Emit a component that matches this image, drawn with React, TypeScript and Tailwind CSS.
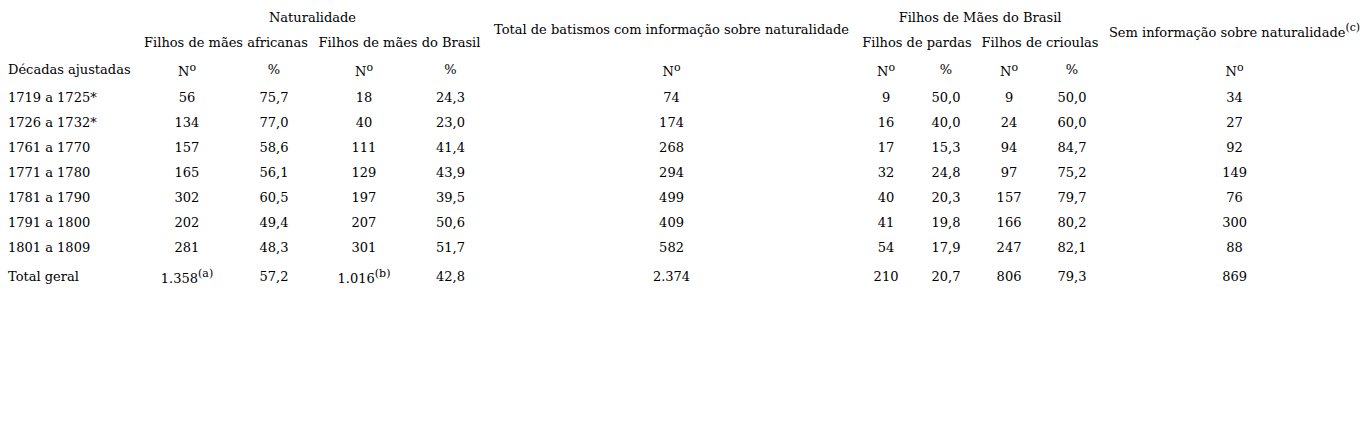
const widths = [139, 96, 78, 102, 71, 371, 58, 62, 64, 62, 263];

type Row = {
  label: string;
  cells: string[];
};

const rows: Row[] = [
  { label: "1719 a 1725*", cells: ["56", "75,7", "18", "24,3", "74", "9", "50,0", "9", "50,0", "34"] },
  { label: "1726 a 1732*", cells: ["134", "77,0", "40", "23,0", "174", "16", "40,0", "24", "60,0", "27"] },
  { label: "1761 a 1770", cells: ["157", "58,6", "111", "41,4", "268", "17", "15,3", "94", "84,7", "92"] },
  { label: "1771 a 1780", cells: ["165", "56,1", "129", "43,9", "294", "32", "24,8", "97", "75,2", "149"] },
  { label: "1781 a 1790", cells: ["302", "60,5", "197", "39,5", "499", "40", "20,3", "157", "79,7", "76"] },
  { label: "1791 a 1800", cells: ["202", "49,4", "207", "50,6", "409", "41", "19,8", "166", "80,2", "300"] },
  { label: "1801 a 1809", cells: ["281", "48,3", "301", "51,7", "582", "54", "17,9", "247", "82,1", "88"] },
];

function No() {
  return (
    <span className="relative top-[2px]">
      N<sup className="text-[11px]">o</sup>
    </span>
  );
}

export default function App() {
  return (
    <div className="min-h-[442px] bg-white pt-[5px] text-[13px] text-black [font-family:'DejaVu_Serif',serif]">
      <table className="table-fixed border-collapse whitespace-nowrap" style={{ width: 1366 }}>
        <colgroup>
          {widths.map((w, i) => (
            <col key={i} style={{ width: w }} />
          ))}
        </colgroup>
        <thead>
          <tr className="h-[25px]">
            <th />
            <th colSpan={4} className="font-normal">Naturalidade</th>
            <th rowSpan={2} className="font-normal">Total de batismos com informação sobre naturalidade</th>
            <th colSpan={4} className="font-normal">Filhos de Mães do Brasil</th>
            <th rowSpan={2} className="pt-[5px] font-normal">
              Sem informação sobre naturalidade<sup className="text-[11px]">(c)</sup>
            </th>
          </tr>
          <tr className="h-[25px]">
            <th />
            <th colSpan={2} className="font-normal">Filhos de mães africanas</th>
            <th colSpan={2} className="font-normal">Filhos de mães do Brasil</th>
            <th colSpan={2} className="font-normal">Filhos de pardas</th>
            <th colSpan={2} className="font-normal">Filhos de crioulas</th>
          </tr>
          <tr className="h-[30px]">
            <th className="pl-2 text-left font-normal">Décadas ajustadas</th>
            <th className="font-normal"><No /></th>
            <th className="font-normal">%</th>
            <th className="font-normal"><No /></th>
            <th className="font-normal">%</th>
            <th className="font-normal"><No /></th>
            <th className="font-normal"><No /></th>
            <th className="font-normal">%</th>
            <th className="font-normal"><No /></th>
            <th className="font-normal">%</th>
            <th className="font-normal"><No /></th>
          </tr>
        </thead>
        <tbody>
          {rows.map((r) => (
            <tr key={r.label} className="h-[25px]">
              <td className="pl-2">{r.label}</td>
              {r.cells.map((c, i) => (
                <td key={i} className="text-center">{c}</td>
              ))}
            </tr>
          ))}
          <tr className="h-[33px]">
            <td className="pl-2">Total geral</td>
            <td className="text-center">
              <span className="relative top-[2px]">
                1.358<sup className="text-[11px]">(a)</sup>
              </span>
            </td>
            <td className="text-center">57,2</td>
            <td className="text-center">
              <span className="relative top-[2px]">
                1.016<sup className="text-[11px]">(b)</sup>
              </span>
            </td>
            <td className="text-center">42,8</td>
            <td className="text-center">2.374</td>
            <td className="text-center">210</td>
            <td className="text-center">20,7</td>
            <td className="text-center">806</td>
            <td className="text-center">79,3</td>
            <td className="text-center">869</td>
          </tr>
        </tbody>
      </table>
    </div>
  );
}
